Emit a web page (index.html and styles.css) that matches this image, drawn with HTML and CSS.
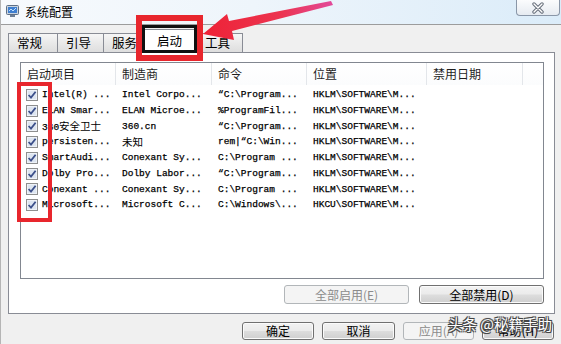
FILE: index.html
```html
<!DOCTYPE html>
<html lang="zh-CN">
<head>
<meta charset="utf-8">
<title>系统配置</title>
<link rel="stylesheet" href="styles.css">
</head>
<body>
<div class="window">
  <div class="titlebar">
    <svg class="appicon" width="13" height="12" viewBox="0 0 13 12">
      <rect x="0.5" y="0.5" width="12" height="9" rx="1" fill="#c9d3de" stroke="#5d6f86"/>
      <rect x="2" y="2" width="9" height="6" fill="#3f7fd0"/>
      <path d="M3 6 L5 4 L7 6 L10 3" stroke="#bfe0ff" stroke-width="1" fill="none"/>
      <rect x="4" y="10" width="5" height="2" fill="#6d7f96"/>
    </svg>
    <span class="title">系统配置</span>
    <div class="close">
      <svg width="14" height="12" viewBox="0 0 14 12">
        <path d="M3 2 L11 10 M11 2 L3 10" stroke="#68707c" stroke-width="3.4" stroke-linecap="round"/>
        <path d="M3 2 L11 10 M11 2 L3 10" stroke="#ffffff" stroke-width="1.4" stroke-linecap="round"/>
      </svg>
    </div>
  </div>

  <div class="tabs">
    <div class="tab t1">常规</div>
    <div class="tab t2">引导</div>
    <div class="tab t3">服务</div>
    <div class="tab sel">启动</div>
    <div class="tab t5">工具</div>
  </div>

  <div class="panel">
    <div class="list">
      <div class="lrow lhead">
        <div class="hc c1">启动项目</div>
        <div class="hc">制造商</div>
        <div class="hc">命令</div>
        <div class="hc">位置</div>
        <div class="hc">禁用日期</div>
        <div class="hc last"></div>
      </div>
      <div class="lbody">
        <div class="lrow item">
          <div class="cell c1"><svg class="cb" width="12" height="12" viewBox="0 0 12 12"><rect x="0.5" y="0.5" width="11" height="11" fill="#eef2f8" stroke="#8e8f8f"/><rect x="2" y="2" width="8" height="8" fill="#dde5f0"/><path d="M2.6 6 L5 8.6 L9.6 2.8" stroke="#3b4f8a" stroke-width="1.8" fill="none"/></svg><span>Intel(R) ...</span></div>
          <div class="cell">Intel Corpo...</div>
          <div class="cell">“C:\Program...</div>
          <div class="cell">HKLM\SOFTWARE\M...</div>
          <div class="cell"></div><div class="cell"></div>
        </div>
        <div class="lrow item">
          <div class="cell c1"><svg class="cb" width="12" height="12" viewBox="0 0 12 12"><rect x="0.5" y="0.5" width="11" height="11" fill="#eef2f8" stroke="#8e8f8f"/><rect x="2" y="2" width="8" height="8" fill="#dde5f0"/><path d="M2.6 6 L5 8.6 L9.6 2.8" stroke="#3b4f8a" stroke-width="1.8" fill="none"/></svg><span>ELAN Smar...</span></div>
          <div class="cell">ELAN Microe...</div>
          <div class="cell">%ProgramFil...</div>
          <div class="cell">HKLM\SOFTWARE\M...</div>
          <div class="cell"></div><div class="cell"></div>
        </div>
        <div class="lrow item">
          <div class="cell c1"><svg class="cb" width="12" height="12" viewBox="0 0 12 12"><rect x="0.5" y="0.5" width="11" height="11" fill="#eef2f8" stroke="#8e8f8f"/><rect x="2" y="2" width="8" height="8" fill="#dde5f0"/><path d="M2.6 6 L5 8.6 L9.6 2.8" stroke="#3b4f8a" stroke-width="1.8" fill="none"/></svg><span>360<span class="cjk">安全卫士</span></span></div>
          <div class="cell">360.cn</div>
          <div class="cell">“C:\Program...</div>
          <div class="cell">HKLM\SOFTWARE\M...</div>
          <div class="cell"></div><div class="cell"></div>
        </div>
        <div class="lrow item">
          <div class="cell c1"><svg class="cb" width="12" height="12" viewBox="0 0 12 12"><rect x="0.5" y="0.5" width="11" height="11" fill="#eef2f8" stroke="#8e8f8f"/><rect x="2" y="2" width="8" height="8" fill="#dde5f0"/><path d="M2.6 6 L5 8.6 L9.6 2.8" stroke="#3b4f8a" stroke-width="1.8" fill="none"/></svg><span>persisten...</span></div>
          <div class="cell"><span class="cjk">未知</span></div>
          <div class="cell">rem|“C:\Win...</div>
          <div class="cell">HKLM\SOFTWARE\M...</div>
          <div class="cell"></div><div class="cell"></div>
        </div>
        <div class="lrow item">
          <div class="cell c1"><svg class="cb" width="12" height="12" viewBox="0 0 12 12"><rect x="0.5" y="0.5" width="11" height="11" fill="#eef2f8" stroke="#8e8f8f"/><rect x="2" y="2" width="8" height="8" fill="#dde5f0"/><path d="M2.6 6 L5 8.6 L9.6 2.8" stroke="#3b4f8a" stroke-width="1.8" fill="none"/></svg><span>SmartAudi...</span></div>
          <div class="cell">Conexant Sy...</div>
          <div class="cell">C:\Program ...</div>
          <div class="cell">HKLM\SOFTWARE\M...</div>
          <div class="cell"></div><div class="cell"></div>
        </div>
        <div class="lrow item">
          <div class="cell c1"><svg class="cb" width="12" height="12" viewBox="0 0 12 12"><rect x="0.5" y="0.5" width="11" height="11" fill="#eef2f8" stroke="#8e8f8f"/><rect x="2" y="2" width="8" height="8" fill="#dde5f0"/><path d="M2.6 6 L5 8.6 L9.6 2.8" stroke="#3b4f8a" stroke-width="1.8" fill="none"/></svg><span>Dolby Pro...</span></div>
          <div class="cell">Dolby Labor...</div>
          <div class="cell">“C:\Program...</div>
          <div class="cell">HKLM\SOFTWARE\M...</div>
          <div class="cell"></div><div class="cell"></div>
        </div>
        <div class="lrow item">
          <div class="cell c1"><svg class="cb" width="12" height="12" viewBox="0 0 12 12"><rect x="0.5" y="0.5" width="11" height="11" fill="#eef2f8" stroke="#8e8f8f"/><rect x="2" y="2" width="8" height="8" fill="#dde5f0"/><path d="M2.6 6 L5 8.6 L9.6 2.8" stroke="#3b4f8a" stroke-width="1.8" fill="none"/></svg><span>Conexant ...</span></div>
          <div class="cell">Conexant Sy...</div>
          <div class="cell">C:\Program ...</div>
          <div class="cell">HKLM\SOFTWARE\M...</div>
          <div class="cell"></div><div class="cell"></div>
        </div>
        <div class="lrow item">
          <div class="cell c1"><svg class="cb" width="12" height="12" viewBox="0 0 12 12"><rect x="0.5" y="0.5" width="11" height="11" fill="#eef2f8" stroke="#8e8f8f"/><rect x="2" y="2" width="8" height="8" fill="#dde5f0"/><path d="M2.6 6 L5 8.6 L9.6 2.8" stroke="#3b4f8a" stroke-width="1.8" fill="none"/></svg><span>Microsoft...</span></div>
          <div class="cell">Microsoft C...</div>
          <div class="cell">C:\Windows\...</div>
          <div class="cell">HKCU\SOFTWARE\M...</div>
          <div class="cell"></div><div class="cell"></div>
        </div>
      </div>
    </div>
    <div class="panel-btns">
      <button class="btn wide" disabled>全部启用(E)</button>
      <button class="btn wide">全部禁用(D)</button>
    </div>
  </div>

  <div class="footer">
    <button class="btn b71">确定</button>
    <button class="btn b72">取消</button>
    <button class="btn b70" disabled>应用(A)</button>
    <button class="btn b71">帮助(H)</button>
  </div>

  <div class="mark-tab"></div>
  <div class="mark-black"></div>
  <div class="mark-cb"></div>
  <svg class="arrow" width="561" height="60" viewBox="0 0 561 60">
    <defs>
      <linearGradient id="ag" x1="0" y1="0" x2="1" y2="0">
        <stop offset="0" stop-color="#ee2236"/>
        <stop offset="0.6" stop-color="#ec3450"/>
        <stop offset="1" stop-color="#e24a9a"/>
      </linearGradient>
    </defs>
    <polygon points="202,34 226,14 228,21 330,1 332,5 231,31 233,40" fill="url(#ag)"/>
  </svg>
  <div class="watermark">头条 @秘籍手助</div>
</div>
</body>
</html>
```

FILE: styles.css
```css
* { box-sizing: border-box; }

html, body {
  margin: 0;
  padding: 0;
  background: #f0f0f0;
}

.window {
  position: relative;
  width: 561px;
  height: 344px;
  overflow: hidden;
  background: #f0f0f0;
  border-left: 1px solid #b5b5b5;
  font-family: "Noto Sans CJK SC", "Liberation Sans", sans-serif;
  font-size: 12px;
  color: #000;
}

/* title bar */
.titlebar {
  height: 25px;
  display: flex;
  align-items: flex-start;
  border-bottom: 1px solid #9c9c9c;
  background: linear-gradient(to right, #f7fafd 0%, #eef5fb 45%, #dbecf9 100%);
}
.appicon {
  margin: 5px 0 0 5px;
  flex: none;
}
.title {
  margin: 4px 0 0 6px;
  line-height: 16px;
  font-size: 12px;
}
.close {
  margin-left: auto;
  margin-right: 1px;
  width: 44px;
  height: 16px;
  border: 1px solid #8a97a8;
  border-top: none;
  border-radius: 0 0 4px 4px;
  background: linear-gradient(#fbfcfd, #e6ebf1);
  display: flex;
  align-items: center;
  justify-content: center;
}

/* tabs */
.tabs {
  height: 27px;
  display: flex;
  align-items: flex-end;
  padding-left: 7px;
  position: relative;
  z-index: 2;
}
.tab {
  height: 19px;
  border: 1px solid #898c95;
  border-bottom: none;
  margin-right: -1px;
  padding-left: 8px;
  line-height: 18px;
  font-size: 12.5px;
  background: linear-gradient(#f6f6f6, #e8e8e8 55%, #dedede);
}
.t1 { width: 50px; }
.t2 { width: 47px; }
.t3 { width: 42px; }
.sel {
  width: 54px;
  height: 24px;
  margin-left: -2px;
  margin-bottom: -1px;
  padding-left: 14px;
  line-height: 22px;
  background: #fff;
  position: relative;
  z-index: 3;
}
.t5 { width: 48px; padding-left: 9px; }

/* panel */
.panel {
  margin-left: 7px;
  width: 547px;
  height: 262px;
  border: 1px solid #898c95;
  background: #fff;
  padding: 9px 10px 0 11px;
}

.list {
  width: 524px;
  height: 217px;
  border: 1px solid #828790;
  background: #fff;
}
.lrow {
  display: grid;
  grid-template-columns: 95px 96px 95px 120px 96px 1fr;
}
.lhead {
  height: 22px;
}
.hc {
  border-right: 1px solid #e3e6ea;
  padding-left: 6px;
  line-height: 21px;
  font-size: 12px;
  color: #1e1e1e;
  background: linear-gradient(#ffffff, #fbfcfd);
}
.hc.last { border-right: none; }

.lbody { padding-top: 2px; }
.item {
  height: 15.75px;
}
.cell {
  padding-left: 6px;
  font-family: "Liberation Mono", "Noto Sans CJK SC", monospace;
  font-size: 9.5px;
  line-height: 15.75px;
  white-space: nowrap;
  overflow: hidden;
  color: #000;
  -webkit-text-stroke: 0.25px #000;
}
.cell.c1 {
  display: flex;
  align-items: center;
  padding-left: 5px;
}
.cb {
  flex: none;
  margin-right: 4px;
}
.cjk {
  font-family: "Noto Sans CJK SC", sans-serif;
  font-size: 10.5px;
  -webkit-text-stroke: 0;
}

/* buttons */
.btn {
  font-family: "Noto Sans CJK SC", "Liberation Sans", sans-serif;
  font-size: 12px;
  color: #000;
  height: 19px;
  padding: 0;
  line-height: 16px;
  border: 1px solid #707070;
  border-radius: 3px;
  background: linear-gradient(#f2f2f2 0%, #ebebeb 48%, #dddddd 52%, #cfcfcf 100%);
  box-shadow: inset 0 0 0 1px #fbfbfb;
}
.btn:disabled {
  color: #8b8b8b;
  border-color: #b2b6b9;
  background: #f4f4f4;
  box-shadow: none;
}
.panel-btns {
  margin-top: 6px;
  display: flex;
  justify-content: flex-end;
  gap: 10px;
}
.wide { width: 125px; }

.footer {
  margin-top: 8px;
  display: flex;
  justify-content: flex-end;
  gap: 8px;
  padding-right: 7px;
}
.footer .btn { height: 18px; }
.b71 { width: 72px; }
.b72 { width: 73px; }
.b70 { width: 71px; }

/* annotations overlaid on the screenshot */
.mark-tab {
  position: absolute;
  left: 135px;
  top: 15px;
  width: 67px;
  height: 46px;
  border: 6px solid #e8262d;
  z-index: 5;
}
.mark-black {
  position: absolute;
  left: 141px;
  top: 25px;
  width: 55px;
  height: 28px;
  border: 3px solid #111;
  z-index: 6;
}
.mark-cb {
  position: absolute;
  left: 16px;
  top: 82px;
  width: 35px;
  height: 140px;
  border: 4px solid #e8262d;
  z-index: 5;
}
.arrow {
  position: absolute;
  left: 0;
  top: 0;
  z-index: 7;
}
.watermark {
  position: absolute;
  left: 447px;
  top: 314px;
  font-size: 14.5px;
  line-height: 20px;
  color: #fff;
  white-space: nowrap;
  text-shadow: 1px 1px 0 #444, -1px -1px 0 #444, 1px -1px 0 #444, -1px 1px 0 #444, 0 0 2px #333;
  z-index: 8;
}
```
